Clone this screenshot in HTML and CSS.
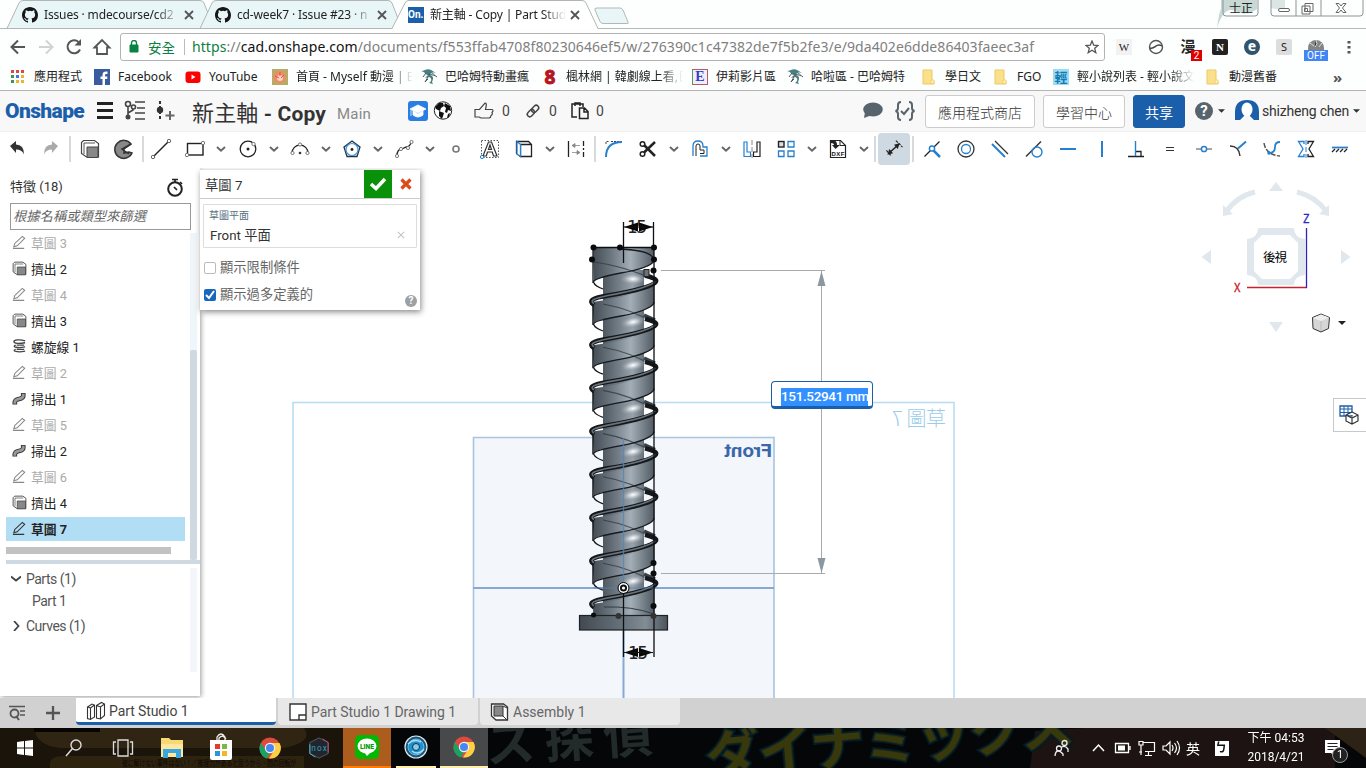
FILE: index.html
```html
<!DOCTYPE html>
<html lang="zh-Hant">
<head>
<meta charset="utf-8">
<title>新主軸 - Copy | Part Studio 1</title>
<link rel="stylesheet" href="styles.css">
</head>
<body>
<svg class="defs" width="0" height="0">
  <defs>
    <linearGradient id="land" x1="593" x2="654" y1="0" y2="0" gradientUnits="userSpaceOnUse"><stop offset="0" stop-color="#454d54"/><stop offset=".3" stop-color="#6c7781"/><stop offset=".62" stop-color="#a3aeb7"/><stop offset=".82" stop-color="#77828b"/><stop offset="1" stop-color="#525b63"/></linearGradient>
    <linearGradient id="root" x1="603" x2="645" y1="0" y2="0" gradientUnits="userSpaceOnUse"><stop offset="0" stop-color="#50585f"/><stop offset=".4" stop-color="#75808a"/><stop offset=".7" stop-color="#98a3ac"/><stop offset="1" stop-color="#606a72"/></linearGradient>
    <linearGradient id="flange" x1="0" x2="1" y1="0" y2="0"><stop offset="0" stop-color="#424a51"/><stop offset=".5" stop-color="#69737c"/><stop offset=".75" stop-color="#828c95"/><stop offset="1" stop-color="#4c545b"/></linearGradient>
    <radialGradient id="shine"><stop offset="0" stop-color="#fff"/><stop offset=".35" stop-color="#ccd3d8" stop-opacity=".9"/><stop offset="1" stop-color="#88939c" stop-opacity="0"/></radialGradient>
    <filter id="soft"><feGaussianBlur stdDeviation=".7"/></filter>
  </defs>
  <symbol id="github" viewBox="0 0 16 16"><path fill="#171717" d="M8 0C3.58 0 0 3.58 0 8c0 3.54 2.29 6.53 5.47 7.59.4.07.55-.17.55-.38 0-.19-.01-.82-.01-1.49-2.01.37-2.53-.49-2.69-.94-.09-.23-.48-.94-.82-1.13-.28-.15-.68-.52-.01-.53.63-.01 1.08.58 1.23.82.72 1.21 1.87.87 2.33.66.07-.52.28-.87.51-1.07-1.78-.2-3.64-.89-3.64-3.95 0-.87.31-1.59.82-2.15-.08-.2-.36-1.02.08-2.12 0 0 .67-.21 2.2.82a7.4 7.4 0 0 1 4 0c1.53-1.04 2.2-.82 2.2-.82.44 1.1.16 1.92.08 2.12.51.56.82 1.27.82 2.15 0 3.07-1.87 3.75-3.65 3.95.29.25.54.73.54 1.48 0 1.07-.01 1.93-.01 2.2 0 .21.15.46.55.38A8 8 0 0 0 16 8c0-4.42-3.58-8-8-8z"/></symbol>
  <symbol id="close" viewBox="0 0 10 10"><path d="M1 1l8 8M9 1L1 9" stroke="#555" stroke-width="1.8" fill="none"/></symbol>
  <symbol id="folder" viewBox="0 0 16 16"><path d="M2 1h9v11h2v3H2z" fill="#fbe08b" stroke="#edc964"/><path d="M10 14.5V11h3v3.5z" fill="#fff0b8" stroke="#edc964" stroke-width=".7"/></symbol>
  <symbol id="dragon" viewBox="0 0 16 16"><path d="M0 2c4 0 6-3 10-1l5 3-4-1 4 4-5-3-1 2c3 1 4 3 2 7l1 2-4-1c3-2 3-5 0-6l-4 1 3-3C4 6 5 3 0 2z" fill="#477f82"/><path d="M7 5c4 1 7 1 9 3M7 8l-3 5 3-3M5 4L2 8" stroke="#555" fill="none"/></symbol>
  <symbol id="chev" viewBox="0 0 10 6"><path d="M1 1l4 3.7L9 1" fill="none" stroke="#666" stroke-width="1.9"/></symbol>
  <symbol id="caret" viewBox="0 0 8 4"><path d="M0 0h8L4 4z" fill="#333"/></symbol>
  <symbol id="pencil" viewBox="0 0 16 16"><path d="M2 12.500l1-3.500 8-7.500 2.500 2-8 8zM1 14.300h12" fill="none" stroke="currentColor" stroke-width="1.2"/></symbol>
  <symbol id="extrude" viewBox="0 0 20 20"><path d="M1.500 14.500V3.500l2-2h11l4 3v13.500h-12z" fill="#fff" stroke="#444" stroke-width="1.2"/><path d="M4 15V4h11" fill="none" stroke="#555"/><path d="M7 8h11v10.500H7z" fill="#888" stroke="#444"/></symbol>
  <symbol id="sweep" viewBox="0 0 16 16"><path d="M3 14.500V12c0-5 9-2 9-7V2" fill="none" stroke="#333" stroke-width="5"/><path d="M3 13.500V12c0-5 9-2 9-7V3" fill="none" stroke="#999" stroke-width="3"/></symbol>
  <symbol id="helix" viewBox="0 0 16 16"><g fill="none" stroke="#444" stroke-width="1.400"><path d="M14 2C8 0 2 1 2 3s6 2 12 1M4 6.500c-5 2 2 3.500 10 2M4 11c-5 2 2 3.500 10 2M5 6.500h8M5 11h8"/></g></symbol>
  <symbol id="chrome" viewBox="0 0 22 22"><circle cx="11" cy="11" r="10.500" fill="#dd4b3e"/><path d="M2 6l5 8 4 2-3 5.500A10.500 10.500 0 0 1 2 6z" fill="#1aa260"/><path d="M11 6h9.500A10.500 10.500 0 0 1 10 21.500l5-8z" fill="#ffce44"/><circle cx="11" cy="11" r="5.200" fill="#f1f1f1"/><circle cx="11" cy="11" r="4" fill="#4587f3"/></symbol>
</svg>

<div class="browser">
  <header class="tabs">
    <div class="tab first"><svg class="shape" viewBox="0 0 208 29"><path d="M1 28.500L13 3q1-2.500 4-2.500h177q3 0 4 2.500l10 25.500z" fill="#e8f6f8" stroke="#b3b5b5"/></svg><svg class="fav"><use href="#github"/></svg><span class="name fade">Issues · mdecourse/cd2</span><svg class="x"><use href="#close"/></svg></div>
    <div class="tab"><svg class="shape" viewBox="0 0 208 29"><path d="M1 28.500L13 3q1-2.500 4-2.500h172q3 0 4 2.500l10 25.500z" fill="#e8f6f8" stroke="#b3b5b5"/></svg><svg class="fav"><use href="#github"/></svg><span class="name fade">cd-week7 · Issue #23 · n</span><svg class="x"><use href="#close"/></svg></div>
    <div class="tab active"><svg class="shape" viewBox="0 0 208 29"><path d="M0 29L13 3q1-2.500 4-2.500h173q3 0 4 2.500l12 26z" fill="#fff"/><path d="M0 28.500L13 3q1-2.500 4-2.500h173q3 0 4 2.500l12 25.500" fill="none" stroke="#b3b5b5"/></svg><b class="on">On.</b><span class="name fade">新主軸 - Copy | Part Stud</span><svg class="x"><use href="#close"/></svg></div>
    <svg class="newtab" viewBox="0 0 36 18"><path d="M3 1h23q2 0 3 2l5 12q1 1.500-1 1.500H9q-2 0-3-2L1 3q-1-2 2-2z" fill="#e8f6f8" stroke="#b5b7b7"/></svg>
    <div class="winctl">
      <svg viewBox="0 0 150 32" width="150" height="32"><path d="M5 0h36v9q-10 8-22 2Q8 6 1 28 3 12 5 9z" fill="#c8d8d5"/><path d="M55 0h14v8q-8 2-14 0z" fill="#dbe6e4"/><path d="M7 0v13q0 3 3 3h29q3 0 3-3V0M55 0v13q0 3 3 3h86q3 0 3-3V0M80 0v16M105 0v16" fill="none" stroke="#8d9496"/><rect x="62.500" y="8.500" width="11" height="3" rx="1.500" fill="#fff" stroke="#666"/><path d="M89 3.500h8v8h-8zM86 6h8v8h-8z" fill="#fff" stroke="#666"/><path d="M88.500 8.500h3v3h-3z" fill="none" stroke="#666"/><path d="M120 3.500h3l2 2.500 2-2.500h3l-3.500 4.500 3.500 4.500h-3l-2-2.500-2 2.500h-3l3.500-4.500z" fill="#fff" stroke="#666"/></svg>
      <span>士正</span>
    </div>
  </header>
  <div class="nav">
    <svg class="n" viewBox="0 0 28 28"><path d="M21 14H8M14 7.500L7.500 14l6.500 6.500" fill="none" stroke="#555" stroke-width="2"/></svg>
    <svg class="n" viewBox="0 0 28 28"><path d="M7 14h13M14 7.500l6.500 6.500-6.500 6.500" fill="none" stroke="#d2d2d2" stroke-width="2"/></svg>
    <svg class="n" viewBox="0 0 28 28"><path d="M20 16.500A6.500 6.500 0 1 1 18.500 9" fill="none" stroke="#555" stroke-width="2"/><path d="M21 6v6.500h-6.500z" fill="#555"/></svg>
    <svg class="n" viewBox="0 0 28 28"><path d="M6.500 14.500L14 7l7.500 7.500H19V21H9v-6.500z" fill="none" stroke="#555" stroke-width="1.800"/></svg>
    <div class="omni">
      <svg width="10" height="13" viewBox="0 0 10 13"><path d="M1 5h8v7H1z" fill="#0b8043" stroke="#0b8043"/><path d="M2.500 5V3a2.500 2.500 0 0 1 5 0v2" fill="none" stroke="#0b8043" stroke-width="1.400"/></svg>
      <span class="safe">安全</span><i></i>
      <span class="url"><em>https</em>://<strong>cad.onshape.com</strong>/documents/f553ffab4708f80230646ef5/w/276390c1c47382de7f5b2fe3/e/9da402e6dde86403faeec3af</span>
      <svg class="star" width="14" height="14" viewBox="0 0 14 14"><path d="M7 1l1.700 4.200 4.400.3-3.400 2.800 1.100 4.400L7 10.300l-3.800 2.400 1.100-4.400L.9 5.500l4.400-.3z" fill="none" stroke="#555" stroke-width="1.300"/></svg>
    </div>
    <div class="ext"><b class="w">W</b></div>
    <div class="ext"><svg viewBox="0 0 16 16"><circle cx="8" cy="8" r="6.500" fill="none" stroke="#555" stroke-width="1.400"/><path d="M2 9c5 2 6-6 12-2" stroke="#444" stroke-width="1.500" fill="none"/></svg></div>
    <div class="ext"><b class="man">漫</b><b class="badge red">2</b></div>
    <div class="ext"><b class="nn">N</b></div>
    <div class="ext"><b class="ee">e</b></div>
    <div class="ext"><b class="ss">S</b></div>
    <div class="ext"><svg viewBox="0 0 16 16"><path d="M0 9a8 8 0 0 1 16 0v3H0z" fill="#858585"/><path d="M8 1l1 4-2 3M2 4l4 3M14 4l-3 4" stroke="#ddd"/></svg><b class="badge off">OFF</b></div>
    <svg class="dots" viewBox="0 0 4 14"><path d="M.5 1h3v2.500h-3zM.5 6h3v2.500h-3zM.5 11h3v2.500h-3z" fill="#555"/></svg>
  </div>
  <div class="marks">
    <a><svg viewBox="0 0 16 16"><path d="M1 1h3v3H1zM6 1h3v3H6zM11 1h3v3h-3z" fill="#d84b3e"/><path d="M1 6h3v3H1z" fill="#399754"/><path d="M6 6h3v3H6z" fill="#3f79dd"/><path d="M11 6h3v3h-3zM6 11h3v3H6zM11 11h3v3h-3z" fill="#efb42f"/><path d="M1 11h3v3H1z" fill="#399754"/></svg><span>應用程式</span></a>
    <a><svg viewBox="0 0 16 16"><path d="M0 0h16v16H0z" fill="#3b5ba0"/><path d="M11 16V10h2.300V7.600H11V6q0-1.300 2.500-1V2.600Q8.500 2 8.500 6v1.600h-2V10h2v6z" fill="#fff"/></svg><span>Facebook</span></a>
    <a><svg viewBox="0 0 16 16"><rect y="2.500" x=".5" width="15" height="11.500" rx="3" fill="#f00"/><path d="M6.500 5.500v5l4-2.500z" fill="#fff"/></svg><span>YouTube</span></a>
    <a><svg viewBox="0 0 16 16"><path d="M0 0h16v16H0z" fill="#bba967"/><circle cx="7.500" cy="8" r="6" fill="#ee8b68"/><circle cx="8" cy="9" r="3" fill="#ffcec2"/><path d="M8 3v4M3 7l4 2M12 6l-3 3" stroke="#d25b42"/></svg><span class="fade">首頁 - Myself 動漫 | E</span></a>
    <a><svg viewBox="0 0 16 16"><use href="#dragon"/></svg><span>巴哈姆特動畫瘋</span></a>
    <a><b class="eight">8</b><span class="fade">楓林網 | 韓劇線上看,日</span></a>
    <a><b class="eicon">E</b><span>伊莉影片區</span></a>
    <a><svg viewBox="0 0 16 16"><use href="#dragon"/></svg><span>哈啦區 - 巴哈姆特</span></a>
    <a><svg viewBox="0 0 16 16"><use href="#folder"/></svg><span>學日文</span></a>
    <a><svg viewBox="0 0 16 16"><use href="#folder"/></svg><span>FGO</span></a>
    <a><b class="light">輕</b><span class="fade">輕小說列表 - 輕小說文</span></a>
    <a><svg viewBox="0 0 16 16"><use href="#folder"/></svg><span>動漫舊番</span></a>
    <b class="more">»</b>
  </div>
</div>

<div class="appbar">
  <div class="logo">Onshape</div>
  <svg viewBox="0 0 30 24"><path d="M7 4.500h16M7 11.500h16M7 18.500h16" stroke="#222" stroke-width="3"/></svg>
  <svg viewBox="0 0 30 24"><g fill="none" stroke="#444" stroke-width="1.600"><circle cx="8" cy="5" r="2.500"/><path d="M8 8v12M8 14l5-3v-1"/><circle cx="13.500" cy="8" r="2"/><path d="M15 3h10M17 9h8M15 14h10M15 20h10"/></g><circle cx="8" cy="18" r="2.500" fill="#444"/></svg>
  <svg viewBox="0 0 30 24"><path d="M10 2v20" stroke="#333" stroke-width="2" stroke-dasharray="3 2"/><circle cx="10" cy="11" r="3.200" fill="#333"/><path d="M20 12v9M15.500 16.500h9" stroke="#666" stroke-width="2"/></svg>
  <div class="title"><span>新主軸</span> - Copy</div><div class="main">Main</div>
  <svg viewBox="0 0 26 24"><rect x="3" y="2" width="20" height="20" rx="3" fill="#2a7de1"/><path d="M13 6l8 4-8 4-8-4zM8 12v4q5 4 10 0v-4l-5 3zM6 11v6" fill="#fff" stroke="#fff" stroke-width=".8"/></svg>
  <svg viewBox="0 0 26 24"><circle cx="12" cy="11.500" r="8.700" fill="#fff" stroke="#222"/><path d="M4 8l4-4 4 0 1 3-3 2-1 3-4-2zM8 12l5 2-2 6-3-3zM14 4l5 3 1 5-3-1-1 3-2-1 1-4-2-2zM17 15l2-1-1 4-2 1z" fill="#111"/></svg>
  <div class="stat like"><svg viewBox="0 0 22 22"><path d="M2 9.500h4.500L12 3q2 0 1 4l-.5 2.500H19q2 1 0 3 1 2-1 3 0 2-2 2.500H8l-2-1H2z" fill="none" stroke="#444" stroke-width="1.200"/></svg>0</div>
  <div class="stat"><svg viewBox="0 0 22 22"><g transform="rotate(-45 11 11)" fill="none" stroke="#444" stroke-width="1.500"><rect x="4" y="8.500" width="8" height="5" rx="2.500"/><rect x="10" y="8.500" width="8" height="5" rx="2.500"/></g></svg>0</div>
  <div class="stat"><svg viewBox="0 0 22 22"><path d="M8 17H3V4h11v3M6 6V3h5v3M10.500 18.500V8h5l3.500 3.500v7zM15 8v4h4" fill="none" stroke="#222" stroke-width="1.500"/></svg>0</div>
  <svg viewBox="0 0 26 24"><ellipse cx="13" cy="10.500" rx="9.800" ry="7" fill="#58646d"/><path d="M5 13l-1 6 8-3z" fill="#58646d"/></svg>
  <svg viewBox="0 0 26 24"><path d="M9 3Q6 3 6 6v3q0 2.500-2.500 3Q6 12.500 6 15v3q0 3 3 3M17 3q3 0 3 3v3q0 2.500 2.500 3-2.500.5-2.500 3v3q0 3-3 3M9 12l3 3 5-6" fill="none" stroke="#58646d" stroke-width="2"/></svg>
  <div class="btn">應用程式商店</div><div class="btn">學習中心</div><div class="btn blue">共享</div>
  <div class="help"><b>?</b><svg><use href="#caret"/></svg></div>
  <div class="user"><svg viewBox="0 0 24 22"><path d="M0 20V12Q0 0 12 0t12 12v8h-5l-5-5h-4l-5 5z" fill="#1b5faa"/><ellipse cx="12" cy="9.500" rx="5.500" ry="7" fill="#fff"/></svg><span>shizheng chen</span><svg class="c"><use href="#caret"/></svg></div>
</div>

<div class="tools">
  <svg viewBox="0 0 34 26"><path d="M10 10l6-5v3.500q8 0 8 10-2-5-8-5V17z" fill="#333"/></svg>
  <svg viewBox="0 0 34 26"><path d="M24 10l-6-5v3.500q-8 0-8 10 2-5 8-5V17z" fill="#aaa"/></svg>
  <i class="s5"></i>
  <svg viewBox="0 0 34 26"><use href="#extrude" x="7" y="3" width="20" height="20"/></svg>
  <svg viewBox="0 0 34 26"><path d="M17 13l7-5A9 9 0 1 0 25 17l-3-1-5 1z" fill="#888" stroke="#333" stroke-width="1.500"/><path d="M24 8l-9 5 7 5" fill="none" stroke="#333" stroke-width="1.500"/></svg>
  <i class="s3"></i>
  <svg viewBox="0 0 34 26"><path d="M9.500 20.500l15-15" stroke="#222" stroke-width="1.500"/><g fill="#fff" stroke="#666"><circle cx="9" cy="21" r="1.700"/><circle cx="25" cy="5" r="1.700"/></g></svg>
  <svg viewBox="0 0 34 26"><rect x="9.500" y="7.500" width="15.500" height="11.500" fill="none" stroke="#222" stroke-width="1.400"/><g fill="#fff" stroke="#777"><circle cx="9" cy="19" r="1.700"/><circle cx="25" cy="7" r="1.700"/></g></svg>
  <u class="c19"><svg><use href="#chev"/></svg></u>
  <svg viewBox="0 0 34 26"><circle cx="17" cy="13" r="7.800" fill="none" stroke="#222" stroke-width="1.300"/><circle cx="17" cy="13" r="1.500" fill="#222"/><circle cx="22.500" cy="8" r="1.700" fill="#fff" stroke="#777"/></svg>
  <u><svg><use href="#chev"/></svg></u>
  <svg viewBox="0 0 34 26"><path d="M9 17a8 8 0 0 1 16 0" fill="none" stroke="#222" stroke-width="1.300"/><circle cx="17" cy="17" r="1.300" fill="#333"/><g fill="#fff" stroke="#777"><circle cx="9.500" cy="17" r="1.600"/><circle cx="24.500" cy="17" r="1.600"/><circle cx="17" cy="8.500" r="1.600"/></g></svg>
  <u><svg><use href="#chev"/></svg></u>
  <svg viewBox="0 0 34 26"><path d="M17 5l8 6-3 9.500H12L9 11z" fill="none" stroke="#234" stroke-width="1.300"/><circle cx="17" cy="13.500" r="6" fill="none" stroke="#4594dd" stroke-width="1.200"/><circle cx="17" cy="13.500" r="1.400" fill="#222"/></svg>
  <u><svg><use href="#chev"/></svg></u>
  <svg viewBox="0 0 34 26"><path d="M10 20c0-8 4-6 7-8s6 0 7-6" fill="none" stroke="#222" stroke-width="1.400"/><g fill="#fff" stroke="#777"><circle cx="10" cy="20" r="1.600"/><circle cx="14" cy="13" r="1.600"/><circle cx="21" cy="12" r="1.600"/><circle cx="24.500" cy="6" r="1.600"/></g></svg>
  <u><svg><use href="#chev"/></svg></u>
  <svg viewBox="0 0 34 26"><circle cx="17" cy="13" r="3" fill="none" stroke="#777" stroke-width="1.600"/></svg>
  <svg viewBox="0 0 34 26"><rect x="8.500" y="4.500" width="17" height="17" fill="none" stroke="#555" stroke-dasharray="1.500 1.500"/><path d="M10 20l5.500-14h3L24 20h-3.500l-1.200-4h-4.800l-1.200 4zM15.500 13.500h3L17 9z" fill="#fff" stroke="#333" stroke-width="1.200"/><circle cx="9" cy="21" r="1.600" fill="#fff" stroke="#2680cf"/></svg>
  <svg viewBox="0 0 34 26"><path d="M9.500 5.500h12l3 3v12h-11l-4-3zM13.500 20.500v-12h11" fill="none" stroke="#222" stroke-width="1.300"/><path d="M10 5.500l3.500 3v12L10 18z" fill="#fff" stroke="#2680cf" stroke-width="1.300"/></svg>
  <u><svg><use href="#chev"/></svg></u>
  <svg viewBox="0 0 34 26"><path d="M9.500 5v16M24.500 5v5M24.500 12v2M24.500 16v5" stroke="#222" stroke-width="1.300"/><path d="M13 9.500h8M13 9.500l3-2v4zM13 16.500h8M21 16.500l-3-2v4z" stroke="#888" fill="#888" stroke-width=".8"/></svg>
  <i></i>
  <svg viewBox="0 0 34 26"><path d="M9 8V5.500h3M14 5.500h10" fill="none" stroke="#444" stroke-dasharray="2 1"/><path d="M9 21Q9 6 25 6" fill="none" stroke="#2680cf" stroke-width="2"/></svg>
  <svg viewBox="0 0 34 26"><path d="M13 9l11 11M13 16.500L24 6" stroke="#222" stroke-width="2.500"/><g fill="none" stroke="#222" stroke-width="1.500"><circle cx="11.500" cy="8" r="2.300"/><circle cx="11.500" cy="18" r="2.300"/></g></svg>
  <u><svg><use href="#chev"/></svg></u>
  <svg viewBox="0 0 34 26"><path d="M10 20V10q0-5 5-5t5 5v1h4v9h-7" fill="none" stroke="#2680cf" stroke-width="1.300"/><path d="M13 20V10q0-2 2-2t2 2v4h4v3.500h-4" fill="none" stroke="#222"/></svg>
  <u><svg><use href="#chev"/></svg></u>
  <svg viewBox="0 0 34 26"><path d="M9 6h3v10h3.500v4.500H9z" fill="none" stroke="#2680cf" stroke-width="1.200"/><path d="M25 6h-3v10h-3.500v4.500H25z" fill="none" stroke="#222" stroke-width="1.200"/><path d="M17 4v18" stroke="#888" stroke-dasharray="5 2"/></svg>
  <svg viewBox="0 0 34 26"><rect x="9.500" y="5.500" width="5.500" height="5.500" fill="#ddd" stroke="#222" stroke-width="1.400"/><path d="M19 5.500h6V11h-6zM9.500 15H15v5.500H9.500zM19 15h6v5.500h-6z" fill="none" stroke="#2680cf" stroke-width="1.300"/></svg>
  <u><svg><use href="#chev"/></svg></u>
  <svg viewBox="0 0 34 26"><path d="M9.500 21.500v-17h10l5 5v12z" fill="#fff" stroke="#222" stroke-width="1.200"/><path d="M19 4.500v5h5" fill="none" stroke="#222"/><path d="M10 5q6-2 6 4h3l-4.500 4L11 9h2q0-2-3-2z" fill="#222"/><text x="10.500" y="20" font-family="Liberation Sans" font-size="6" font-weight="bold" textLength="13" fill="#111">DXF</text></svg>
  <u><svg><use href="#chev"/></svg></u>
  <i></i>
  <svg class="sel" viewBox="0 0 34 26"><path d="M12 17L21 9" stroke="#222" stroke-width="1.700"/><path d="M10 19l2-6 4 4.500zM23 7l-6 1.500 4 4.500z" fill="#222"/><path d="M19 4l7 7M9 14.500l5 6" stroke="#222" stroke-width="1.200" stroke-dasharray="3 1"/></svg>
  <i></i>
  <svg viewBox="0 0 34 26"><path d="M9.500 20.500l15-15" stroke="#222" stroke-width="1.300"/><path d="M18 14l7 7" stroke="#2680cf" stroke-width="2.500"/><circle cx="17" cy="12.500" r="2.600" fill="#fff" stroke="#2680cf" stroke-width="1.500"/></svg>
  <svg viewBox="0 0 34 26"><circle cx="17" cy="13" r="8" fill="none" stroke="#333" stroke-width="1.300"/><circle cx="17" cy="13" r="4.500" fill="none" stroke="#2680cf" stroke-width="1.300"/></svg>
  <svg viewBox="0 0 34 26"><path d="M12 5l13 13" stroke="#333" stroke-width="1.300"/><path d="M9 8l13 13" stroke="#2680cf" stroke-width="1.900"/></svg>
  <svg viewBox="0 0 34 26"><path d="M9 20.500L24 5.500" stroke="#333" stroke-width="1.400"/><circle cx="20" cy="16" r="5" fill="none" stroke="#2680cf" stroke-width="1.400"/></svg>
  <svg viewBox="0 0 34 26"><path d="M9 13h16" stroke="#2680cf" stroke-width="2"/></svg>
  <svg viewBox="0 0 34 26"><path d="M17 5v16" stroke="#2680cf" stroke-width="2"/></svg>
  <svg viewBox="0 0 34 26"><path d="M9 20.500h16M16.500 15.500H22v5" fill="none" stroke="#222" stroke-width="1.300"/><path d="M16.500 5v15" stroke="#2680cf" stroke-width="1.400"/></svg>
  <svg viewBox="0 0 34 26"><path d="M13 11.500h8M13 14.500h8" stroke="#333" stroke-width="1.200"/></svg>
  <svg viewBox="0 0 34 26"><path d="M9 13h16" stroke="#888" stroke-width="1.500"/><circle cx="17" cy="13" r="2.600" fill="#fff" stroke="#2680cf" stroke-width="1.500"/></svg>
  <svg viewBox="0 0 34 26"><path d="M9 10q9 0 10 10" fill="none" stroke="#333" stroke-width="1.400"/><path d="M17 12.500l8-7" stroke="#2680cf" stroke-width="2"/></svg>
  <svg viewBox="0 0 34 26"><path d="M9 7q2 12 16 13" fill="none" stroke="#555" stroke-width="1.500" stroke-dasharray="5 1.500"/><path d="M14 17q6 0 6-6 0-5 5-5" fill="none" stroke="#2680cf" stroke-width="1.800"/><circle cx="14" cy="17" r="1.800" fill="#2680cf"/></svg>
  <svg viewBox="0 0 34 26"><path d="M15 8V5.500H9.500l4.500 7.500-4.500 7.500H15V18" fill="none" stroke="#2680cf" stroke-width="1.300"/><path d="M19 8V5.500h5.500L20 13l4.500 7.500H19V18" fill="none" stroke="#222" stroke-width="1.300"/><path d="M17 4v18" stroke="#2680cf" stroke-dasharray="5 2"/></svg>
  <svg viewBox="0 0 34 26"><path d="M9 11.500h16" stroke="#2680cf" stroke-width="1.800"/><path d="M9 16l3-3M13 16l3-3M17 16l3-3M21 16l3-3" stroke="#222" stroke-width="1.300"/></svg>
</div>

<div class="work">
  <svg class="scene" viewBox="0 168 1366 530">
    <rect x="473.500" y="437.500" width="300" height="270" fill="#f3f7fb"/>
    <path d="M473.500 698V437.500h300.500V698" fill="none" stroke="#a9c3e0" stroke-width="1.600"/>
    <path d="M293 698V402.500h661V698" fill="none" stroke="#b5dcf3" stroke-width="1.500"/>
    <path d="M473 588h301M623.500 588v110" stroke="#88a9d6" stroke-width="2"/>
    <g transform="translate(772 457) scale(-1 1)"><text class="front" textLength="48" lengthAdjust="spacingAndGlyphs">Front</text></g>
    <g transform="translate(946 426) scale(-1 1)"><text class="sketch" textLength="54">草圖 7</text></g>
    <path d="M603 270h41v345h-41z" fill="url(#root)"/>
    <path d="M593 247h61v13c0 5-15 11-33 14-17 3-30 6-27 9z" fill="url(#land)"/>
    <defs>
      <g id="turn">
        <path d="M592.500 302q50-6 62-21v21.500c0 5-15 10-33 13-17 3-30 6-27.500 9.500z" fill="url(#land)"/>
        <ellipse cx="633" cy="322" rx="13" ry="6" fill="url(#shine)" transform="rotate(-12 633 322)"/>
        <path d="M603 304q28 5 51 19" fill="none" stroke="#30363b" stroke-width="1.100" opacity=".75"/>
        <path d="M644 315l11 5" stroke="#3a4248" stroke-width="3.500"/>
        <path d="M593 305v20" stroke="#15191c" stroke-width="1.500"/>
        <path d="M603 331q-8-3-9-6c-3-3 10-6 27-9 18-3 33-9 33-14" fill="none" stroke="#171b1f" stroke-width="1.300"/>
        <path id="ridge" d="M594 305c-6-4-2-7 14-9.500 24-4 45-9 48-14 1-2-3-4-11-6" fill="none" stroke="#14181b" stroke-width="4.500"/>
        <path d="M594 303.500c-5-3 0-5 14-8 22-4 43-9 47-14" fill="none" stroke="#69737b" stroke-width="1.600"/>
      </g>
    </defs>
    <path d="M593 262q27 3 63 18" fill="none" stroke="#343b40" stroke-width="1.200" opacity=".8"/>
    <ellipse cx="633" cy="279" rx="13" ry="6" fill="url(#shine)"/>
    <path d="M593 248v35M603 289q-8-3-9-6c-3-3 10-7 27-10 18-3 33-8 33-13M618 249q36 1 36 12" fill="none" stroke="#171b1f" stroke-width="1.300"/>
    <use href="#turn"/><use href="#turn" y="43.200"/><use href="#turn" y="86.400"/><use href="#turn" y="129.600"/><use href="#turn" y="172.800"/><use href="#turn" y="216"/><use href="#turn" y="259.200"/>
    <path d="M592.500 604q50-6 62-21v32h-61z" fill="url(#land)"/><use href="#ridge" y="302.400"/><path d="M594 605.900c-5-3 0-5 14-8 22-4 43-9 47-14" fill="none" stroke="#69737b" stroke-width="1.600"/><path d="M604 607q28-1 50 7" fill="none" stroke="#343b40"/>
    <rect x="579.500" y="615.500" width="88" height="14.500" fill="url(#flange)" stroke="#1d2226" stroke-width="1.200"/>
    <path d="M623.500 438v150" stroke="#5283bd" stroke-width="1.300" opacity=".75"/><path d="M593 588h61" stroke="#5283bd" opacity=".7"/>
    <path d="M593 247.500h61V657M653.500 222v26M623.500 222v41M623.500 588v69" fill="none" stroke="#0d0f11" stroke-width="1.300"/>
    <g fill="#0b0c0d"><circle cx="593.500" cy="247.500" r="3"/><circle cx="620" cy="247.500" r="3"/><circle cx="654" cy="247.500" r="3"/><circle cx="592" cy="259.500" r="3"/><circle cx="654" cy="259.500" r="3"/><circle cx="653.500" cy="270.500" r="3"/><circle cx="653.500" cy="563" r="3"/><circle cx="653.500" cy="573.500" r="3"/><circle cx="653.500" cy="606" r="3"/><circle cx="593.500" cy="615" r="2.500"/><circle cx="618.500" cy="616" r="3" fill="#333"/><circle cx="653.500" cy="616" r="3" fill="#333"/></g>
    <rect x="644" y="269.500" width="5" height="7" fill="#68737b" stroke="#222"/>
    <circle cx="623.500" cy="588" r="4.300" fill="#111" stroke="#fff" stroke-width="1.500"/><circle cx="623.500" cy="588" r="5.500" fill="none" stroke="#111"/><circle cx="623.500" cy="588" r="1.600" fill="#fff"/>
    <g class="dim"><text x="627" y="233" textLength="20">15</text><text x="628" y="658.500" textLength="20">15</text></g>
    <path d="M624 227l14-4.500v9zM653 227l-14-4.500v9zM624 652.500l14-4.500v9zM653 652.500l-14-4.500v9z" fill="#080808"/>
    <path d="M624 227h29M624 652.500h29" stroke="#111"/>
    <path d="M661 270.500h164M661 573.500h164M821.500 271v302" stroke="#a8abad"/>
    <path d="M821.500 271l-4 15h8zM821.500 573l-4-15h8z" fill="#8d979f"/>
    <g fill="#e0e7ed"><path d="M1276 182l7 9h-14zM1276 332l7-10h-14zM1201.500 257l9.500-7v14zM1350.500 257l-9.500-7v14z"/><path d="M1223 216v-11l10 9zM1329 216v-11l-10 9z"/><path d="M1258 228h36q0 10 11 11v36q-11 1-11 10h-36q0-9-11-10v-36q11-1 11-11z"/></g>
    <path d="M1226 212q11-16 29-20M1327 212q-12-16-30-20" fill="none" stroke="#e0e7ed" stroke-width="5"/>
    <path d="M1262 235h28l8 8v28l-8 8h-28l-8-8v-28z" fill="#fff"/>
    <text x="1263" y="262" font-size="12.500" textLength="24" fill="#000">後視</text>
    <path d="M1247 287.500h60" stroke="#c8232c" stroke-width="1.300"/><path d="M1306.500 228v60" stroke="#3023b8" stroke-width="1.300"/>
    <text x="1303" y="223" font-size="12" textLength="6.500" lengthAdjust="spacingAndGlyphs" fill="#3023c8" stroke="#3023c8" stroke-width=".3">Z</text><text x="1234" y="292" font-size="12" textLength="6.500" lengthAdjust="spacingAndGlyphs" fill="#c8232c" stroke="#c8232c" stroke-width=".3">X</text>
    <path d="M1321 314l8.500 3.500-1 11-7.500 3.500-8-3.500-.5-11z" fill="#d6d6d6" stroke="#333"/><path d="M1313 318l8 3 8-3.500-8-3z" fill="#eee"/><path d="M1321 321v10" stroke="#bbb"/><path d="M1338 321h8l-4 4z" fill="#222"/>
  </svg>
  <aside class="side">
    <div class="sidehead"><span>特徵 (18)</span><svg width="18" height="19" viewBox="0 0 18 19"><circle cx="9" cy="11" r="6.800" fill="none" stroke="#222" stroke-width="2"/><path d="M6 1.500h6M9 2v3M8 9l3 3M14 4l2 2" stroke="#222" stroke-width="1.700"/></svg></div>
    <div class="filter">根據名稱或類型來篩選</div>
    <div class="listwrap">
      <div class="list">
        <div class="dimmed"><svg><use href="#pencil"/></svg>草圖 3</div>
        <div><svg><use href="#extrude"/></svg>擠出 2</div>
        <div class="dimmed"><svg><use href="#pencil"/></svg>草圖 4</div>
        <div><svg><use href="#extrude"/></svg>擠出 3</div>
        <div><svg><use href="#helix"/></svg>螺旋線 1</div>
        <div class="dimmed"><svg><use href="#pencil"/></svg>草圖 2</div>
        <div><svg><use href="#sweep"/></svg>掃出 1</div>
        <div class="dimmed"><svg><use href="#pencil"/></svg>草圖 5</div>
        <div><svg><use href="#sweep"/></svg>掃出 2</div>
        <div class="dimmed"><svg><use href="#pencil"/></svg>草圖 6</div>
        <div><svg><use href="#extrude"/></svg>擠出 4</div>
        <div class="cur"><svg><use href="#pencil"/></svg>草圖 7</div>
        <p></p>
      </div>
      <div class="scroll"><i></i></div>
    </div>
    <div class="split"></div>
    <div class="parts"><div class="tree">
      <div><svg viewBox="0 0 10 10"><path d="M0 2.500l5 4 5-4" fill="none" stroke="#444" stroke-width="1.800"/></svg>Parts (1)</div>
      <div class="leaf">Part 1</div>
      <div class="last"><svg viewBox="0 0 10 10"><path d="M3 0l4.500 5L3 10" fill="none" stroke="#444" stroke-width="1.800"/></svg>Curves (1)</div>
    </div><div class="scroll2"></div></div>
  </aside>
  <section class="dialog">
    <div class="dhead"><span>草圖 7</span><b class="ok"><svg width="18" height="14" viewBox="0 0 18 14"><path d="M2 7l5 4.500L16 2" fill="none" stroke="#fff" stroke-width="3.500"/></svg></b><svg width="12" height="12" viewBox="0 0 12 12"><path d="M1.500 1.500l9 9M10.500 1.500l-9 9" stroke="#dd4b1a" stroke-width="3.200"/></svg></div>
    <div class="plane"><small>草圖平面</small><div><span>Front 平面</span><svg width="8" height="8" viewBox="0 0 10 10"><path d="M1 1l8 8M9 1L1 9" stroke="#c4c8ca" stroke-width="1.500"/></svg></div></div>
    <div class="check"><i></i>顯示限制條件</div>
    <div class="check second"><i class="on2"><svg width="12" height="12" viewBox="0 0 12 12"><path d="M2 6l3 3 5-7" fill="none" stroke="#fff" stroke-width="2"/></svg></i>顯示過多定義的<b>?</b></div>
  </section>
  <div class="value"><span>151.52941 mm</span></div>
  <div class="edge"><svg width="24" height="22" viewBox="0 0 24 22"><path d="M2 2h12v10H2z" fill="#fff" stroke="#1b5faa" stroke-width="1.300"/><path d="M2 5h12M2 8.500h12M6 2v10M10 2v10" stroke="#1b5faa" stroke-width="1"/><path d="M14 8l6 3v6l-6 3-6-3v-6zM8 11l6 3 6-3M14 14v6" fill="#fff" stroke="#333" stroke-width="1.200"/></svg></div>
</div>

<div class="doctabs">
  <svg viewBox="0 0 18 18"><path d="M1 2.500h16M12 7h5M12 11h5" stroke="#555" stroke-width="1.500"/><circle cx="6.500" cy="9.500" r="4" fill="none" stroke="#555" stroke-width="1.800"/><path d="M8 12l3 4" stroke="#555" stroke-width="2"/></svg>
  <svg class="plus" viewBox="0 0 18 18"><path d="M9 2v14M2 9h14" stroke="#555" stroke-width="2.300"/></svg>
  <div class="dt act"><svg viewBox="0 0 20 20"><path d="M1.500 6l4.500-3 2.500 1v12l-4 2.500-3-1zM10.500 4.500l5-3 3 1.500v11.500l-4 3.500-4-1zM1.500 6l3 1 4-3M4.500 7v11M10.500 4.500l4 1.500 4-3M14.500 6v12" fill="#fff" stroke="#333" stroke-width="1.100"/></svg>Part Studio 1</div>
  <div class="dt draw"><svg viewBox="0 0 20 20"><path d="M2 2h16v16H2zM11 18v-5h7" fill="#fff" stroke="#333" stroke-width="1.400"/></svg>Part Studio 1 Drawing 1</div>
  <div class="dt asm"><svg viewBox="0 0 20 20"><path d="M1.500 2h12l4 3v13H6l-4.500-4z" fill="#fff" stroke="#333" stroke-width="1.300"/><path d="M4 4h9v10H4z" fill="#888" stroke="#333"/><path d="M13 4l4 2M13 14l4 4" stroke="#333"/></svg>Assembly 1</div>
</div>

<footer class="taskbar">
  <svg class="paper" viewBox="0 728 1366 40">
    <path d="M0 728h350v40H0z" fill="#1a140a"/><path d="M34 728h270q10 14-20 20H60q-24-3-26-20z" fill="#302512"/><path d="M50 764q0-8 14-8h240v12H50z" fill="#2e230f"/><path d="M34 728h66v4H34z" fill="#070503"/>
    <path d="M1035 731l50-3h250v40H1030z" fill="#1c1312"/><path d="M1325 728h41v30z" fill="#2c2215"/>
    <g filter="url(#soft)"><text x="486" y="762" font-size="50" font-weight="bold" fill="#20292c" transform="rotate(-4 500 755)" textLength="168">ス探偵</text><text x="706" y="764" font-size="54" font-weight="bold" fill="#38370a" stroke="#061d27" stroke-width="4" paint-order="stroke" transform="rotate(-5 850 755)" textLength="370">ダイナミックス</text></g>
    <text x="122" y="765.500" font-size="7.500" fill="#0b0805" textLength="174" lengthAdjust="spacingAndGlyphs">彼に解けない事件はない！／推理力があると思うから、闇の回転が</text>
  </svg>
  <div class="tb"><svg viewBox="0 0 22 22"><path d="M3 5l7-1v6.500H3zM11 4l8-1v7.500h-8zM3 11.500h7V18l-7-1zM11 11.500h8V19l-8-1z" fill="#fff"/></svg></div>
  <div class="tb"><svg viewBox="0 0 22 22"><circle cx="13" cy="8" r="5" fill="none" stroke="#ddd" stroke-width="1.400"/><path d="M9.500 11.500L3 19" stroke="#ddd" stroke-width="1.500"/></svg></div>
  <div class="tb"><svg viewBox="0 0 22 22"><path d="M6 3h10v16H6zM4 5H1.500v12H4M18 5h2.500v12H18" fill="none" stroke="#ddd" stroke-width="1.300"/></svg></div>
  <div class="tb"><svg viewBox="0 0 22 22"><path d="M0 1h8l2 2h12v17H0z" fill="#f8d775"/><path d="M0 7h22v13H0z" fill="#ffe79e"/><path d="M2 21v-9h18v9h-5v-5H7v5z" fill="#39a7df"/></svg></div>
  <div class="tb"><svg viewBox="0 0 24 28"><path d="M8 9V4q4-6 8 0v5M10 9V5q4-4 7 1" fill="none" stroke="#eee" stroke-width="1.300"/><path d="M1 7h22v18q0 2-2 2H3q-2 0-2-2z" fill="#fff"/><path d="M6 11h5v5H6z" fill="#e33b2e"/><path d="M13 11h5v5h-5z" fill="#78b843"/><path d="M6 18h5v5H6z" fill="#2b97da"/><path d="M13 18h5v5h-5z" fill="#f3b52b"/></svg></div>
  <div class="tb"><svg><use href="#chrome"/></svg></div>
  <div class="tb"><svg viewBox="0 0 24 24"><path d="M12 1l10 5v12l-10 5-10-5V6z" fill="#20262c" stroke="#50636d"/><path d="M2 8v10l6 4" fill="none" stroke="#5ac0d2"/><path d="M16 2l6 4v11" fill="none" stroke="#c64d82"/><text x="3.500" y="15" font-family="Roboto" font-size="9" textLength="17" fill="#3b9cbd">nox</text></svg></div>
  <div class="tb line"><svg viewBox="0 0 24 24"><rect width="24" height="24" rx="5" fill="#00b900"/><ellipse cx="12" cy="11" rx="9.500" ry="7.500" fill="#fff"/><path d="M9 17l3 4 5-5z" fill="#fff"/><text x="5" y="13.500" font-family="Roboto" font-size="6.500" font-weight="900" textLength="14" lengthAdjust="spacingAndGlyphs" fill="#00a000">LINE</text></svg></div>
  <div class="tb under"><svg viewBox="0 0 24 24"><circle cx="12" cy="12" r="11" fill="#13557b" stroke="#e1e8ec" stroke-width="1.200"/><circle cx="12" cy="12" r="8" fill="#1d91d1" stroke="#78b8d8"/><circle cx="12" cy="12" r="3.500" fill="#8cc9e5" stroke="#063858"/><path d="M4 9q6-6 13-2M20 14q-6 7-12 2" fill="none" stroke="#b1ddf0" stroke-width="1.500"/></svg></div>
  <div class="tb run"><svg><use href="#chrome"/></svg></div>
  <div class="tray">
    <svg viewBox="0 0 20 20"><g fill="none" stroke="#eee" stroke-width="1.300"><circle cx="12.500" cy="5" r="2.500"/><circle cx="7" cy="10.500" r="2.500"/><path d="M10 9q3-2 6 2v3M3 18q1-9 8-2v2"/></g></svg>
    <svg class="up" viewBox="0 0 20 20"><path d="M5 13l5.500-6 5.500 6" fill="none" stroke="#fff" stroke-width="1.500"/></svg>
    <svg viewBox="0 0 20 20"><path d="M2.500 5.500h13v9h-13zM17 8v4" fill="none" stroke="#fff" stroke-width="1.300"/><path d="M5 7.500h7v5H5z" fill="#fff"/></svg>
    <svg viewBox="0 0 20 20"><path d="M6 4.500h11.500v9H8M11.500 14v3M8 17.500h7M2 3.500h4v3.500H2zM4 7v10M2 14h3" fill="none" stroke="#fff" stroke-width="1.200"/></svg>
    <svg viewBox="0 0 20 20"><path d="M2 8h3l4-4v12l-4-4H2zM11 7q2 3 0 6M13.500 5q4 5 0 10M16 3q5 7 0 14" fill="none" stroke="#fff" stroke-width="1.200"/></svg>
    <span class="ying">英</span><span class="ime">ㄅ</span>
    <div class="clock"><span>下午 04:53</span><span>2018/4/21</span></div>
    <div class="note"><svg width="18" height="20" viewBox="0 0 18 20"><path d="M1 2h15v13h-5v4l-4-4H1z" fill="#fff"/><path d="M3.500 5.500h10M3.500 8.500h10M3.500 11.500h6" stroke="#222"/></svg><b>1</b></div>
  </div>
</footer>
</body>
</html>
```
FILE: styles.css
```css
* { box-sizing: border-box; }
body { margin: 0; width: 1366px; height: 768px; overflow: hidden; background: #fff; font-family: Roboto, "Noto Sans CJK TC", sans-serif; font-size: 13px; color: #333; }
svg { display: block; flex: none; }
.defs { position: absolute; }
.fade { -webkit-mask-image: linear-gradient(90deg, #000 calc(100% - 24px), transparent); mask-image: linear-gradient(90deg, #000 calc(100% - 24px), transparent); }

/* browser chrome */
.browser { font-family: "Noto Sans", "Noto Sans CJK TC", sans-serif; background: #fdfefe; height: 91px; border-bottom: 1px solid #b4b4b4; color: #222; }
.tabs { height: 29px; display: flex; border-bottom: 1px solid #b7b9b9; }
.tab { position: relative; width: 193px; height: 29px; flex: none; display: flex; align-items: center; padding-left: 16px; }
.tab.first { margin-left: 6px; }
.tab .shape { position: absolute; left: 0; top: 0; width: 208px; height: 29px; }
.tab .fav, .tab .on { position: relative; width: 16px; height: 16px; margin-right: 6px; }
.tab .on { background: #1b5faa; color: #fff; font: bold 10px/16px Roboto, sans-serif; }
.tab.active { width: 202px; z-index: 1; }
.tab .name { position: relative; width: 136px; white-space: nowrap; font-size: 12px; line-height: 20px; letter-spacing: -.15px; }
.tab .x { position: relative; width: 10px; height: 10px; margin-left: 4px; }
.newtab { width: 36px; height: 18px; margin: 7px 0 0; }
.winctl { position: relative; margin-left: auto; width: 150px; height: 29px; }
.winctl svg { position: absolute; left: 0; top: 0; }
.winctl span { position: absolute; left: 13px; top: 1px; font-size: 12px; line-height: 16px; width: 26px; }
.nav { height: 35px; display: flex; align-items: center; padding-left: 4px; }
.nav .n { width: 28px; height: 28px; }
.omni { width: 985px; height: 28px; margin-left: 4px; border: 1px solid #b3b3b3; border-radius: 3px; background: #fff; display: flex; align-items: center; padding-left: 8px; margin-right: 3px; }
.safe { color: #0b8043; font-size: 13.500px; margin-left: 9px; width: 28px; white-space: nowrap; }
.omni i { width: 1px; height: 16px; background: #bbb; margin: 0 7px 0 8px; }
.url { font-size: 14px; letter-spacing: .07px; color: #808080; width: 878px; white-space: nowrap; }
.url em { font-style: normal; color: #0b8043; } .url strong { font-weight: 400; color: #111; }
.star { margin-left: 15px; }
.ext { position: relative; width: 32px; height: 28px; display: flex; align-items: center; justify-content: center; }
.ext svg { width: 16px; height: 16px; }
.ext b { width: 16px; height: 16px; line-height: 16px; text-align: center; font-size: 11px; }
.w { background: #f2f2f2; font-family: "Liberation Serif", serif; }
.ext .man { font-size: 15px; line-height: 15px; }
.nn { background: #222; color: #fff; font-family: "Liberation Serif", serif; border-radius: 2px; }
.ee { background: #31536c; color: #fff; border-radius: 8px; } .ext .ee { font-size: 14px; line-height: 14px; }
.ss { background: #ddd; border-radius: 2px; } .ext .ss, .ext .w { font-weight: 400; }
.ext .badge { position: absolute; color: #fff; font: 10px/11px Roboto, sans-serif; height: 11px; }
.ext .red { background: #e00000; left: 19px; top: 17px; width: 11px; }
.ext .off { background: #4285f4; left: 4px; top: 17px; width: 24px; }
.dots { width: 4px; height: 14px; margin-left: 15px; }
.marks { height: 26px; display: grid; grid-template-columns: 84px 91px 87px 149px 121px 150px 95px 134px 72px 60px 152px 132px 20px; padding-left: 10px; align-items: center; font-size: 12px; }
.marks a { display: flex; align-items: center; gap: 8px; white-space: nowrap; line-height: 20px; }
.marks a > svg, .marks a > b { width: 16px; height: 16px; flex: none; line-height: 16px; text-align: center; }
.marks .fade { width: 117px; }
.marks .eight { color: #b51522; font-size: 19px; -webkit-text-stroke: 1px #b51522; }
.marks .eicon { border: 1px solid #b65b64; border-left-color: #5a9b54; color: #3a3ac2; font: bold 14px/14px "Liberation Serif", serif; background: #eef; }
.marks .light { background: #9ddcf4; color: #127ab2; font-size: 13px; }
.more { font-size: 15px; color: #555; margin-left: -4px; }

/* document header */
.appbar { height: 40px; background: #f8f8f8; display: grid; align-items: center; grid-template-columns: 90px 30px 30px 42px 145px 68px 26px 42px 49px 47px 291px 32px 33px 118px 90px 62px 40px 131px; }
.appbar > svg { height: 24px; width: 30px; }
.appbar > svg:nth-of-type(n+4) { width: 26px; }
.logo { color: #1b5faa; font-size: 21px; font-weight: 900; padding-left: 5px; letter-spacing: -.6px; line-height: 28px; margin-top: -1px; }
.title { font-size: 21px; font-weight: 700; line-height: 30px; white-space: nowrap; margin-top: 5px; letter-spacing: .15px; }
.title span { font-weight: 400; font-size: 22px; }
.main { font-size: 15px; color: #888; margin-top: 6px; letter-spacing: .2px; }
.stat { display: flex; align-items: center; font-size: 14px; gap: 5px; color: #444; }
.stat.like { gap: 7px; }
.stat svg { width: 22px; height: 22px; }
.btn { height: 33px; border: 1px solid #ccc; border-radius: 3px; background: #fff; display: flex; align-items: center; justify-content: center; font-size: 14px; font-weight: 300; margin-right: 8px; margin-top: 1px; white-space: nowrap; }
.btn.blue { background: #1b5faa; border-color: #1b5faa; color: #fff; margin-right: 10px; font-weight: 400; }
.help { display: flex; align-items: center; gap: 5px; }
.help b { width: 18px; height: 18px; border-radius: 9px; background: #58646d; color: #fff; text-align: center; line-height: 18px; font-size: 15px; }
.help svg, .user .c { width: 7px; height: 4px; }
.user { display: flex; align-items: center; white-space: nowrap; font-size: 14px; }
.user svg:first-child { width: 24px; height: 22px; margin-right: 3px; }
.user span { letter-spacing: -.2px; width: 91px; }

/* sketch toolbar */
.tools { height: 37px; display: flex; align-items: center; border-top: 1px solid #f0f0f0; background: #fff; padding-bottom: 2px; }
.tools > svg { width: 34px; height: 26px; }
.tools > i { width: 4px; height: 26px; background: linear-gradient(90deg, transparent 1px, #d6dadc 1px, #d6dadc 3px, transparent 3px); }
.tools > i.s5 { width: 5px; } .tools > i.s3 { width: 3px; }
.tools u { width: 18px; display: flex; justify-content: center; } .tools u.c19 { width: 18px; margin-right: 1px; }
.tools u svg { width: 10px; height: 6px; }
.tools .sel { background: #ced9e2; border-radius: 4px; height: 32px; border-left: 1px solid #fff; border-right: 1px solid #fff; }

/* modelling area */
.work { position: relative; height: 530px; overflow: hidden; }
.scene { position: absolute; left: 0; top: 0; width: 1366px; height: 530px; }
.scene text { font-family: "Noto Sans CJK TC", sans-serif; }
.scene .front { font: bold 18px Roboto, sans-serif; fill: #3b67aa; }
.scene .sketch { font-size: 20px; fill: #9bcdeb; font-weight: 300; }
.scene .dim text { font: 17px "DejaVu Sans", sans-serif; fill: #222; }
.side { position: absolute; left: 0; top: 0; width: 200px; height: 528px; background: #fff; box-shadow: 1px 1px 5px #999; }
.sidehead { height: 35px; display: flex; justify-content: space-between; padding: 0 16px 0 10px; align-items: center; font-size: 13px; }
.sidehead svg { margin-top: 3px; }
.filter { margin: 0 10px; width: 181px; height: 27px; border: 1px solid #999; font-size: 13.300px; line-height: 26px; padding-left: 2px; font-style: italic; color: #666; white-space: nowrap; }
.listwrap { display: flex; height: 330px; }
.list { width: 190px; padding-left: 6px; }
.list div { height: 26px; width: 179px; display: flex; align-items: center; gap: 4px; padding: 2px 0 0 6px; font-size: 12.800px; white-space: nowrap; line-height: 24px; color: #222; }
.list svg { width: 15px; height: 15px; color: #333; margin-top: -3px; }
.list .dimmed { color: #aaa; } .list .dimmed svg { color: #888; }
.list .cur { background: #b2def5; font-weight: 700; height: 24px; margin-top: 1px; padding-top: 1px; }
.list p { background: #c2c2c2; width: 165px; height: 7px; margin: 6px 0 0; }
.scroll { width: 7px; background: #f0f5fa; padding-top: 117px; margin-top: 3px; height: 327px; }
.scroll i { display: block; height: 210px; background: #ced9e2; border-radius: 2px; }
.split { height: 4px; background: #ced9e2; margin-left: 6px; }
.parts { display: flex; height: 104px; margin-top: 4px; }
.tree { width: 190px; padding-left: 11px; font-size: 14px; letter-spacing: -.5px; color: #555; }
.tree div { display: flex; align-items: center; gap: 5px; height: 22px; white-space: nowrap; }
.tree svg { width: 10px; height: 10px; }
.tree .leaf { padding-left: 21px; } .tree .last { margin-top: 3px; }
.scroll2 { width: 7px; background: #f3f7fb; }
.dialog { position: absolute; left: 200px; top: 2px; width: 220px; height: 140px; background: #fff; box-shadow: 1px 2px 6px #888; }
.dhead { display: flex; align-items: center; height: 29px; border-bottom: 1px solid #ccc; padding-left: 5px; font-size: 13.300px; }
.dhead span { width: 159px; } .dhead > svg { margin-left: 8px; }
.ok { width: 28px; height: 28px; background: #0a910a; display: flex; align-items: center; justify-content: center; }
.plane { margin: 5px 3px 0; height: 44px; border: 1px solid #ddd; padding: 3px 11px 0 5px; border-radius: 1px; }
.plane small { display: block; font-size: 10px; line-height: 16px; color: #56707f; }
.plane div { display: flex; justify-content: space-between; align-items: center; height: 21px; font-size: 13.300px; padding-left: 1px; }
.check { display: flex; align-items: center; height: 20px; margin: 10px 0 0 4px; font-size: 13.300px; color: #666; gap: 4px; line-height: 20px; }
.check.second { margin-top: 7px; }
.check i { width: 12px; height: 12px; border: 1px solid #bbb; border-radius: 2px; margin-bottom: 1px; }
.check i.on2 { background: #1966bd; border: 0; }
.check b { width: 12px; height: 12px; background: #9ba1a5; border-radius: 6px; color: #fff; font-size: 10px; line-height: 12px; text-align: center; margin: 11px 3px 0 auto; }
.value { position: absolute; left: 771px; top: 213px; width: 102px; height: 28px; border: 1px solid #1b5faa; border-bottom-width: 3px; border-radius: 4px; background: #fff; padding: 6px 0 0 9px; }
.value span { display: block; width: 87px; height: 18px; background: #3390ff; color: #fff; font-size: 13.500px; font-weight: 500; line-height: 17px; white-space: nowrap; letter-spacing: -.35px; }
.edge { position: absolute; left: 1333px; top: 230px; width: 35px; height: 34px; border: 1px solid #c4c9cc; background: #fff; padding: 5px 4px; }

/* document tabs */
.doctabs { height: 30px; background: #d1d1d1; display: flex; padding-left: 8px; font-size: 14px; color: #666; }
.doctabs > svg { width: 18px; height: 18px; margin-top: 6px; } .doctabs .plus { margin-left: 18px; margin-right: 14px; }
.dt { width: 200px; height: 27px; background: #e8e8e8; border-radius: 0 0 4px 4px; display: flex; align-items: center; gap: 3px; padding-left: 10px; margin-right: 2px; white-space: nowrap; }
.dt svg { width: 20px; height: 20px; } .dt.act { background: #fff; border-bottom: 3px solid #1b5faa; color: #444; letter-spacing: -.1px; padding-top: 2px; }
.dt.draw { letter-spacing: -.06px; }

/* taskbar */
.taskbar { position: relative; height: 40px; background: #050607; display: flex; }
.paper { position: absolute; left: 0; top: 0; width: 1366px; height: 40px; }
.paper text { font-family: "Noto Sans CJK JP", sans-serif; }
.tb { position: relative; width: 49px; display: flex; align-items: center; justify-content: center; }
.tb svg { width: 22px; height: 22px; } .tb:nth-of-type(5) svg { width: 24px; height: 28px; margin-top: -3px; }
.line { background: #ac5d1d; border-bottom: 2px solid #ff7b08; width: 48px; }
.line svg { width: 24px; height: 24px; }
.under { border-bottom: 2px solid #ffefad; margin: 0 4px 0 5px; width: 40px; } .under svg { width: 24px; height: 24px; }
.run { background: #48494a; border-bottom: 2px solid #ffefad; width: 48px; }
.tray { position: relative; margin-left: auto; width: 314px; display: flex; align-items: center; color: #fff; }
.tray > svg { width: 20px; height: 20px; margin-right: 4px; } .tray .up { margin-left: 12px; margin-right: 5px; }
.ying { width: 30px; font-size: 14px; padding-left: 1px; }
.ime { background: #fff; color: #111; width: 14px; height: 15px; font-size: 12px; line-height: 14px; font-weight: 700; }
.clock { width: 70px; margin-left: 12px; display: flex; flex-direction: column; align-items: center; font-size: 12px; line-height: 19px; white-space: nowrap; }
.note { position: relative; margin-left: 13px; }
.note b { position: absolute; left: 8px; top: 9px; width: 16px; height: 16px; border-radius: 8px; border: 1px solid #999; background: #222; font: 11px/14px Roboto, sans-serif; text-align: center; }
```
